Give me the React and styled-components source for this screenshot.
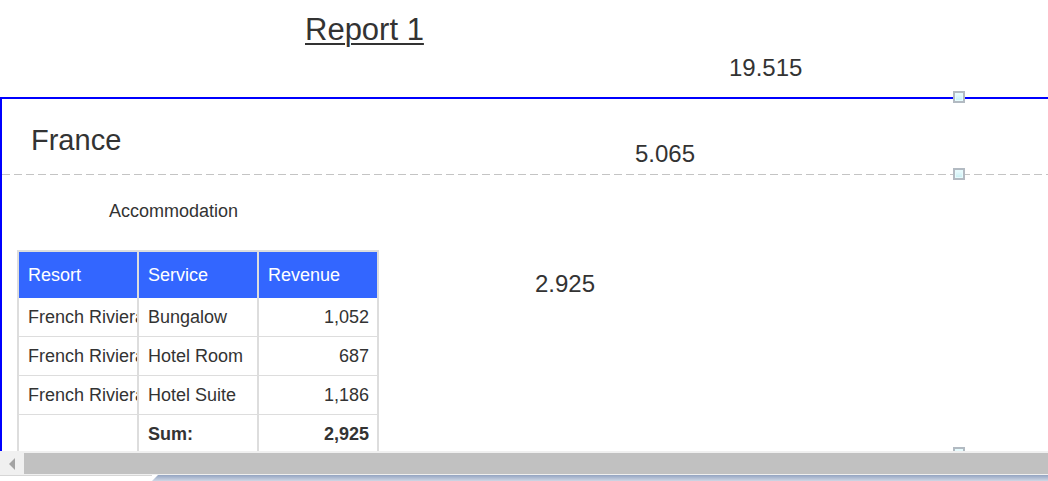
import styled, { createGlobalStyle } from "styled-components"

const Global = createGlobalStyle`
  html, body {
    margin: 0;
    padding: 0;
    background: #fff;
    overflow: hidden;
  }
  body {
    font-family: "Liberation Sans", Arial, sans-serif;
    color: #333;
  }
`

const Screen = styled.div`
  width: 1048px;
  height: 481px;
  display: flex;
  flex-direction: column;
  overflow: hidden;
`

const Viewport = styled.div`
  flex: none;
  height: 451px;
  overflow: hidden;
  background: #fff;
`

const ReportHeader = styled.div`
  position: relative;
  height: 97px;
  border-bottom: 2px solid #0000ff;
`

const Title = styled.h1`
  margin: 0;
  padding: 14px 0 0 305px;
  font-size: 31px;
  line-height: 31px;
  font-weight: normal;

  span {
    text-decoration: underline;
    text-decoration-thickness: 2px;
    text-underline-offset: 3px;
  }
`

const Total = styled.div`
  margin-top: 10.7px;
  padding-left: 729px;
  font-size: 24px;
  line-height: 24px;
`

const Frame = styled.div`
  border-left: 2px solid #0000ff;
`

const GroupBand = styled.div`
  position: relative;
  height: 75px;
  display: grid;
  grid-template-columns: 633px auto;
  align-items: start;

  &::after {
    content: "";
    position: absolute;
    left: 0;
    right: 0;
    bottom: -1px;
    height: 1px;
    background: repeating-linear-gradient(to right, #c4c4c4 0 8px, transparent 8px 12px);
  }
`

const GroupName = styled.div`
  padding: 26.5px 0 0 29px;
  font-size: 29px;
  line-height: 29px;
`

const GroupValue = styled.div`
  padding-top: 42.7px;
  font-size: 24px;
  line-height: 24px;
`

const DetailBand = styled.div`
  position: relative;
  margin-top: 1px;
  height: 278px;
`

const Caption = styled.div`
  padding: 27px 0 0 107px;
  font-size: 18px;
  line-height: 18px;
`

const DetailRow = styled.div`
  display: flex;
  align-items: flex-start;
  margin-top: 30px;
  padding-left: 15px;
`

const Grid = styled.div`
  display: grid;
  grid-template-columns: repeat(3, 120px);
  border-top: 2px solid #ddd;
  border-left: 2px solid #ddd;
  background: #fff;
  font-size: 18px;
`

const Cell = styled.div`
  box-sizing: border-box;
  height: ${(p) => (p.$head ? "46px" : "39px")};
  padding: 0 8px 0 9px;
  display: flex;
  align-items: center;
  justify-content: ${(p) => (p.$right ? "flex-end" : "flex-start")};
  white-space: nowrap;
  overflow: hidden;
  border-right: 2px solid #ddd;
  border-bottom: ${(p) => (p.$head ? "none" : "1px solid #ddd")};
  background: ${(p) => (p.$head ? "#3366ff" : "#fff")};
  color: ${(p) => (p.$head ? "#fff" : "#333")};
  font-weight: ${(p) => (p.$bold ? "bold" : "normal")};
`

const DetailValue = styled.div`
  margin: 22.4px 0 0 156px;
  font-size: 24px;
  line-height: 24px;
`

const Handle = styled.div`
  position: absolute;
  left: ${(p) => p.$left}px;
  bottom: -6px;
  width: 12px;
  height: 12px;
  box-sizing: border-box;
  border: 2px solid #b2bac2;
  background: linear-gradient(#effdff, #c6eef3);
  box-shadow: inset 0 0 0 1px #e6fbfd;
  z-index: 1;
`

const HScroll = styled.div`
  flex: none;
  height: 24px;
  box-sizing: border-box;
  padding-top: 2px;
  background: #f0f0f0;
  display: flex;
  align-items: flex-start;
`

const ArrowButton = styled.div`
  width: 24px;
  height: 21px;
  display: flex;
  align-items: center;
  justify-content: center;
`

const Thumb = styled.div`
  flex: 1;
  height: 21px;
  background: #c1c1c1;
`

const TabStrip = styled.div`
  flex: none;
  height: 6px;
  display: flex;
`

const TabLeft = styled.div`
  width: 152px;
  box-sizing: border-box;
  border-top: 1px solid #d6d6d6;
  background: #fff;
`

const TabRight = styled.div`
  flex: 1;
  background: linear-gradient(#93a4c1, #cfd7e5);
  clip-path: polygon(6px 0, 100% 0, 100% 100%, 0 100%);
`

const rows = [
  ["French Riviera", "Bungalow", "1,052"],
  ["French Riviera", "Hotel Room", "687"],
  ["French Riviera", "Hotel Suite", "1,186"],
]

export default function App() {
  return (
    <Screen>
      <Global />
      <Viewport>
        <ReportHeader>
          <Title>
            <span>Report 1</span>
          </Title>
          <Total>19.515</Total>
          <Handle $left={953} />
        </ReportHeader>
        <Frame>
          <GroupBand>
            <GroupName>France</GroupName>
            <GroupValue>5.065</GroupValue>
            <Handle $left={951} />
          </GroupBand>
          <DetailBand>
            <Caption>Accommodation</Caption>
            <DetailRow>
              <Grid>
                <Cell $head>Resort</Cell>
                <Cell $head>Service</Cell>
                <Cell $head>Revenue</Cell>
                {rows.map((r, i) => [
                  <Cell key={"a" + i}>{r[0]}</Cell>,
                  <Cell key={"b" + i}>{r[1]}</Cell>,
                  <Cell key={"c" + i} $right>{r[2]}</Cell>,
                ])}
                <Cell />
                <Cell $bold>Sum:</Cell>
                <Cell $bold $right>2,925</Cell>
              </Grid>
              <DetailValue>2.925</DetailValue>
            </DetailRow>
            <Handle $left={951} />
          </DetailBand>
        </Frame>
      </Viewport>
      <HScroll>
        <ArrowButton>
          <svg width="6" height="12" viewBox="0 0 6 12">
            <polygon points="6,0 6,12 0,6" fill="#a3a3a3" />
          </svg>
        </ArrowButton>
        <Thumb />
      </HScroll>
      <TabStrip>
        <TabLeft />
        <TabRight />
      </TabStrip>
    </Screen>
  )
}
